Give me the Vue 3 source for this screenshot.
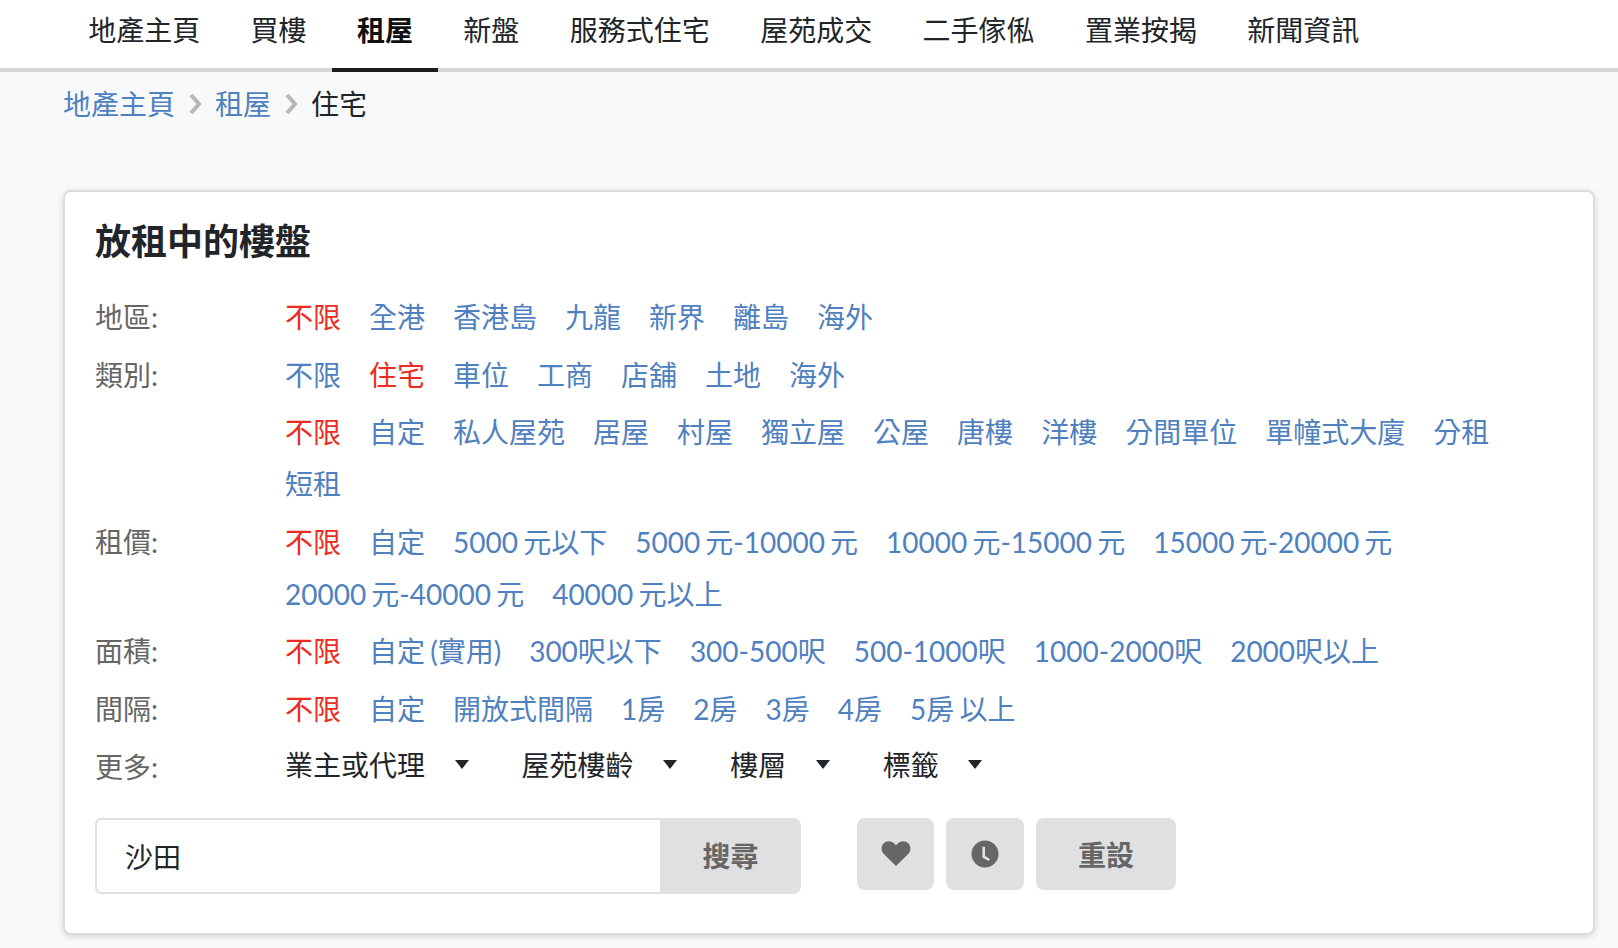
<script setup>
const nav = ['地產主頁','買樓','租屋','新盤','服務式住宅','屋苑成交','二手傢俬','置業按揭','新聞資訊']
const rows = [
  { label:'地區:', active:'不限', items:['不限','全港','香港島','九龍','新界','離島','海外'] },
  { label:'類別:', active:'住宅', items:['不限','住宅','車位','工商','店舖','土地','海外'] },
  { label:'', active:'不限', items:['不限','自定','私人屋苑','居屋','村屋','獨立屋','公屋','唐樓','洋樓','分間單位','單幢式大廈','分租','短租'] },
  { label:'租價:', active:'不限', items:['不限','自定','5000 元以下','5000 元-10000 元','10000 元-15000 元','15000 元-20000 元','20000 元-40000 元','40000 元以上'] },
  { label:'面積:', active:'不限', items:['不限','自定 (實用)','300呎以下','300-500呎','500-1000呎','1000-2000呎','2000呎以上'] },
  { label:'間隔:', active:'不限', items:['不限','自定','開放式間隔','1房','2房','3房','4房','5房 以上'] },
]
const more = ['業主或代理','屋苑樓齡','樓層','標籤']
</script>

<template>
  <div class="page">
    <nav class="nav">
      <a v-for="n in nav" :key="n" class="nav-item" :class="{ on: n === '租屋' }">{{ n }}</a>
    </nav>
    <div class="crumbs">
      <a class="link">地產主頁</a>
      <svg class="chev" width="14" height="22" viewBox="0 0 14 22"><path d="M3 2l8 9-8 9" fill="none" stroke="#b6b8ba" stroke-width="4"/></svg>
      <a class="link">租屋</a>
      <svg class="chev" width="14" height="22" viewBox="0 0 14 22"><path d="M3 2l8 9-8 9" fill="none" stroke="#b6b8ba" stroke-width="4"/></svg>
      <span>住宅</span>
    </div>
    <section class="card">
      <h2 class="title">放租中的樓盤</h2>
      <div v-for="(r, i) in rows" :key="i" class="row">
        <div class="label">{{ r.label }}</div>
        <div class="links">
          <a v-for="it in r.items" :key="it" class="link" :class="{ active: it === r.active }">{{ it }}</a>
        </div>
      </div>
      <div class="row more">
        <div class="label">更多:</div>
        <div class="drops">
          <span v-for="m in more" :key="m" class="drop">{{ m }}<i class="caret"></i></span>
        </div>
      </div>
      <div class="tools">
        <div class="search">
          <input class="input" value="沙田" />
          <button class="btn go">搜尋</button>
        </div>
        <button class="btn heart">
          <svg width="30" height="25" viewBox="0 0 30 26"><path fill="#666" d="M15 26 2.6 13.8C-.8 10.4-.8 5.400 2.200 2.400c3-3 7.800-3 10.800 0L15 4.600l2-2.200c3-3 7.800-3 10.800 0 3 3 3 8-.4 11.400z"/></svg>
        </button>
        <button class="btn clock">
          <svg width="28" height="28" viewBox="0 0 28 28"><circle cx="14" cy="14" r="13.5" fill="#666"/><path d="M12.700 6.700v10l5.600 3.300" fill="none" stroke="#e0e1e3" stroke-width="2.600"/></svg>
        </button>
        <button class="btn reset">重設</button>
      </div>
    </section>
  </div>
</template>

<style scoped>
.page {
  font-family: Lato, "Noto Sans CJK TC", sans-serif;
  font-size: 28px;
  color: #212529;
  background: #f8f9fb;
  overflow: hidden;
  box-sizing: border-box;
  height: 948px;
}
.nav {
  display: flex;
  height: 72px;
  box-sizing: border-box;
  padding-left: 63px;
  background: #fff;
  border-bottom: 4px solid #d4d5d8;
}
.nav-item {
  padding: 0 25.2px;
  height: 72px;
  line-height: 60px;
  box-sizing: border-box;
  color: #212529;
}
.nav-item.on {
  font-weight: 700;
  color: #111;
  border-bottom: 4px solid #1b1c1e;
}
.crumbs {
  display: flex;
  align-items: center;
  gap: 13px;
  height: 62px;
  padding-left: 63px;
}
.chev { margin-top: 2px; }
.link { color: #4f81bf; white-space: nowrap; word-spacing: -2px; }
.link.active { color: #ee2b20; }
.card {
  margin: 56px 23px 0 63px;
  height: 745px;
  box-sizing: border-box;
  padding: 27px 32px 0 30px;
  background: #fff;
  border: 2px solid #dcdddf;
  border-radius: 8px;
  box-shadow: 0 2px 6px rgba(0,0,0,.14);
}
.title {
  margin: 0 0 28px;
  font-size: 36px;
  line-height: 44px;
  font-weight: 700;
  color: #212529;
}
.row {
  display: flex;
  margin-bottom: 5.6px;
  line-height: 52px;
}
.label {
  width: 190px;
  flex: none;
  color: #666;
}
.links {
  display: flex;
  flex-wrap: wrap;
  column-gap: 28px;
  flex: 1;
}
.more { margin-bottom: 0; }
.drops { display: flex; gap: 53px; margin-top: -2px; margin-bottom: -1px; height: 52px; }
.drop { display: flex; align-items: center; }
.caret {
  width: 0;
  height: 0;
  margin-left: 29.6px;
  border-left: 7.5px solid transparent;
  border-right: 7.5px solid transparent;
  border-top: 9px solid #212529;
}
.tools {
  display: flex;
  align-items: flex-start;
  margin-top: 25px;
}
.search { display: flex; height: 76px; margin-right: 56px; }
.input {
  width: 565px;
  height: 76px;
  box-sizing: border-box;
  padding: 0 28px;
  border: 2px solid #dfe0e2;
  border-right: 0;
  border-radius: 6px 0 0 6px;
  font: inherit;
  color: #212529;
  outline: none;
  background: #fff;
}
.btn {
  border: 0;
  background: #dfe0e2;
  color: #666;
  font: inherit;
  font-weight: 700;
  border-radius: 8px;
  display: flex;
  align-items: center;
  justify-content: center;
  padding: 0;
}
.go { width: 141px; height: 76px; padding-bottom: 2px; border-radius: 0 8px 8px 0; }
.heart { width: 77px; height: 72px; margin-right: 12px; }
.clock { width: 78px; height: 72px; margin-right: 12px; }
.reset { width: 140px; height: 72px; }
</style>

<style>
html, body { margin: 0; background: #f8f9fb; }
</style>
